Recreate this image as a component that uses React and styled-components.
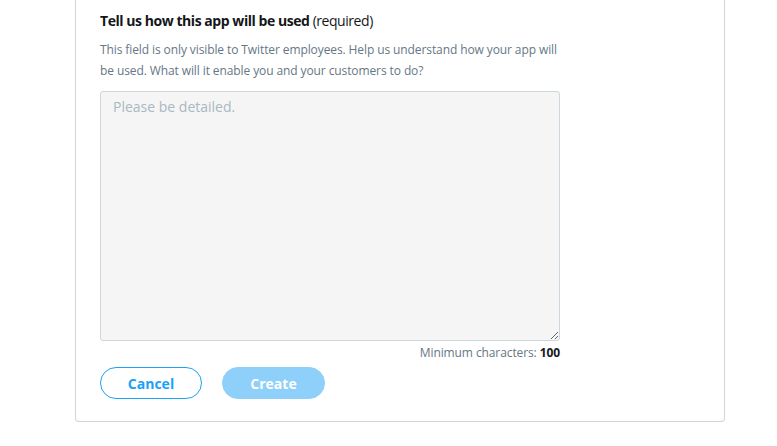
import React from "react";
import styled, { createGlobalStyle } from "styled-components";

const Global = createGlobalStyle`
  html, body { margin: 0; padding: 0; background: #ffffff; }
  body { font-family: "Open Sans", "Noto Sans", sans-serif; }
`;

const Page = styled.div`
  padding: 0 52px 0 75px;
`;

const Card = styled.section`
  width: 650px;
  box-sizing: border-box;
  border: 1px solid #ccd6dd;
  border-top: 0;
  border-radius: 0 0 4px 4px;
  padding: 11px 24px 22px 24px;
  background: #fff;
`;

const Title = styled.h3`
  margin: 0;
  font-size: 14px;
  line-height: 20px;
  font-weight: 700;
  color: #14171a;
  letter-spacing: -0.45px;
  span { font-weight: 400; }
`;

const Help = styled.p`
  margin: 8px 0 10px;
  width: 460px;
  font-size: 12px;
  line-height: 21px;
  color: #657786;
  letter-spacing: -0.1px;
`;

const Field = styled.div`
  width: 460px;
  display: flex;
  flex-direction: column;
`;

const TextArea = styled.textarea`
  box-sizing: border-box;
  width: 460px;
  height: 250px;
  margin: 0;
  padding: 5px 12px;
  border: 1px solid #ccd6dd;
  border-radius: 3px;
  background: #f5f5f5;
  font-family: inherit;
  font-size: 14px;
  line-height: 20px;
  color: #14171a;
  resize: vertical;
  outline: none;
  &::placeholder { color: #aab8c2; }
`;

const Counter = styled.div`
  align-self: flex-end;
  margin-top: 3px;
  font-size: 12px;
  line-height: 18px;
  color: #657786;
  letter-spacing: -0.1px;
  b { color: #14171a; font-weight: 700; }
`;

const Actions = styled.div`
  display: flex;
  gap: 20px;
  margin-top: 5px;
`;

const Button = styled.button`
  box-sizing: border-box;
  width: ${(p) => p.$w}px;
  height: 32px;
  padding: 0;
  border-radius: 16px;
  font-family: inherit;
  font-size: 14px;
  font-weight: 700;
  cursor: pointer;
  border: 1px solid ${(p) => (p.$primary ? "#8ed0f9" : "#1da1f2")};
  background: ${(p) => (p.$primary ? "#8ed0f9" : "#ffffff")};
  color: ${(p) => (p.$primary ? "#ffffff" : "#1da1f2")};
`;

export default function App() {
  return (
    <>
      <Global />
      <Page>
        <Card>
          <Title>
            Tell us how this app will be used <span>(required)</span>
          </Title>
          <Help>
            This field is only visible to Twitter employees. Help us understand how your app will be used. What will it enable you and your customers to do?
          </Help>
          <Field>
            <TextArea placeholder="Please be detailed." />
            <Counter>
              Minimum characters: <b>100</b>
            </Counter>
          </Field>
          <Actions>
            <Button $w={102}>Cancel</Button>
            <Button $w={103} $primary disabled>Create</Button>
          </Actions>
        </Card>
      </Page>
    </>
  );
}
